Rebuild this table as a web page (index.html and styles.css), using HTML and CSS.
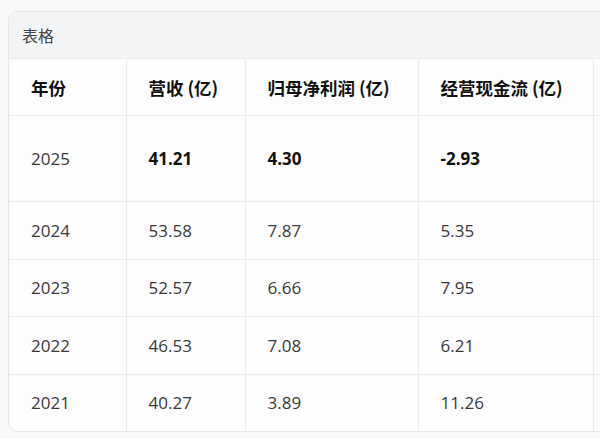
FILE: index.html
```html
<!DOCTYPE html>
<html lang="zh-CN">
<head>
<meta charset="utf-8">
<title>表格</title>
<link rel="stylesheet" href="styles.css">
</head>
<body>
<div class="card">
  <div class="card-title">表格</div>
  <table class="data">
    <colgroup>
      <col class="c1"><col class="c2"><col class="c3"><col class="c4"><col class="c5">
    </colgroup>
    <thead>
      <tr class="head">
        <th>年份</th><th>营收 (亿)</th><th>归母净利润 (亿)</th><th>经营现金流 (亿)</th><th></th>
      </tr>
    </thead>
    <tbody>
      <tr class="tall"><td>2025</td><td class="b">41.21</td><td class="b">4.30</td><td class="b">-2.93</td><td></td></tr>
      <tr><td>2024</td><td>53.58</td><td>7.87</td><td>5.35</td><td></td></tr>
      <tr><td>2023</td><td>52.57</td><td>6.66</td><td>7.95</td><td></td></tr>
      <tr><td>2022</td><td>46.53</td><td>7.08</td><td>6.21</td><td></td></tr>
      <tr><td>2021</td><td>40.27</td><td>3.89</td><td>11.26</td><td></td></tr>
    </tbody>
  </table>
</div>
</body>
</html>
```
FILE: styles.css
```css
html, body {
  margin: 0;
  padding: 0;
  overflow: hidden;
  background: #f8f8f8;
}
body {
  font-family: "Open Sans", "Noto Sans CJK SC", sans-serif;
  color: #333;
}
.card {
  margin: 11px 0 0 8px;
  width: 780px;
  border: 1px solid #e6e6e6;
  border-radius: 10px;
  background: #fdfdfd;
  overflow: hidden;
}
.card-title {
  height: 46px;
  line-height: 46px;
  padding-left: 13px;
  background: #f3f4f5;
  font-family: "Noto Sans CJK SC", sans-serif;
  font-size: 16px;
  color: #444;
}
.data {
  border-collapse: collapse;
  table-layout: fixed;
  width: 779px;
}
.c1 { width: 117px; }
.c2 { width: 119px; }
.c3 { width: 173px; }
.c4 { width: 175px; }
.c5 { width: 195px; }
.data th, .data td {
  border-top: 1px solid #ebebeb;
  border-right: 1px solid #ebebeb;
  padding: 0 0 0 22px;
  text-align: left;
  vertical-align: middle;
  height: 56px;
}
.data tbody tr + tr td {
  height: 56.5px;
}
.data th {
  font-family: "Noto Sans CJK SC", sans-serif;
  font-size: 17.5px;
  font-weight: 700;
  color: #111;
}
.data td {
  font-size: 17px;
  color: #3a3a3a;
}
.data tr.tall td {
  height: 85px;
}
.data td.b {
  font-weight: 700;
  color: #111;
}
```
